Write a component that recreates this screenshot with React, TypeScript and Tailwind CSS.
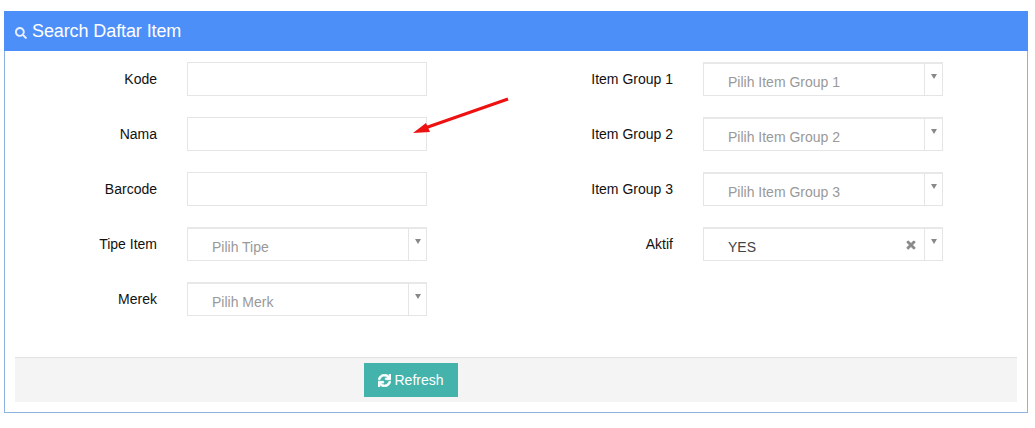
import React from 'react';
import { FaSearch, FaSync, FaTimes } from 'react-icons/fa';

interface SelectBoxProps {
  text: string;
  filled?: boolean;
}

function Field({ label, children }: { label: string; children: React.ReactNode }) {
  return (
    <div className="flex items-center h-[34px]">
      <label className="w-[142px] text-right text-[14px] leading-[20px] text-[#111]">{label}</label>
      <div className="ml-[30px] w-[240px] h-[34px]">{children}</div>
    </div>
  );
}

function TextBox() {
  return <input type="text" className="block w-full h-full border border-[#e5e5e5] bg-white outline-none" />;
}

function SelectBox({ text, filled }: SelectBoxProps) {
  return (
    <div className="flex w-full h-full border border-[#e5e5e5] border-t-2 border-t-[#e8e8e8] bg-white">
      <div className="flex-1 flex items-center pl-[24px] pt-[4px] relative">
        <span className={`text-[14px] leading-[20px] ${filled ? 'text-[#444]' : 'text-[#999]'}`}>{text}</span>
        {filled && <FaTimes className="absolute right-[7px] top-[10px] text-[#888] text-[12px] stroke-[30px] stroke-[#888]" />}
      </div>
      <div className="w-[18px] border-l border-[#e5e5e5] flex justify-center pt-[10px]">
        <div className="w-0 h-0 border-l-[3px] border-r-[3px] border-t-[5px] border-l-transparent border-r-transparent border-t-[#888]" />
      </div>
    </div>
  );
}

export default function App() {
  return (
    <div className="pt-[11px] pl-[4px] bg-white h-[428px] overflow-hidden" style={{ fontFamily: '"Liberation Sans", Arial, sans-serif' }}>
      <div className="relative w-[1024px] h-[402px] border border-[#8fb3e0] border-t-0 bg-white">
        <div className="h-[40px] -mx-px bg-[#4d8ff9] flex items-center pl-[11px] text-white">
          <FaSearch className="text-[12px] mt-[3px] text-[#e8f0ff]" />
          <span className="ml-[5px] text-[18px] leading-[24px] tracking-[-0.1px]">Search Daftar Item</span>
        </div>

        <div className="grid grid-cols-[516px_1fr] pl-[10px] pt-[11px]">
          <div className="flex flex-col gap-[21px]">
            <Field label="Kode"><TextBox /></Field>
            <Field label="Nama"><TextBox /></Field>
            <Field label="Barcode"><TextBox /></Field>
            <Field label="Tipe Item"><SelectBox text="Pilih Tipe" /></Field>
            <Field label="Merek"><SelectBox text="Pilih Merk" /></Field>
          </div>
          <div className="flex flex-col gap-[21px]">
            <Field label="Item Group 1"><SelectBox text="Pilih Item Group 1" /></Field>
            <Field label="Item Group 2"><SelectBox text="Pilih Item Group 2" /></Field>
            <Field label="Item Group 3"><SelectBox text="Pilih Item Group 3" /></Field>
            <Field label="Aktif"><SelectBox text="YES" filled /></Field>
          </div>
        </div>

        <div className="mt-[41px] ml-[10px] w-[1002px] h-[45px] border-t border-[#e2e2e2] bg-[#f4f4f4] pt-[5px] pl-[349px]">
          <button className="flex items-center justify-center w-[94px] h-[34px] bg-[#43b3ac] text-white text-[14px]">
            <FaSync className="text-[13px] mr-[3px] stroke-[30px] stroke-white" />
            Refresh
          </button>
        </div>

        {/* red annotation arrow on top of the form */}
        <svg className="absolute left-[400px] top-[80px]" width="120" height="60" viewBox="0 0 120 60">
          <line x1="103" y1="8" x2="20" y2="37" stroke="#ee1111" strokeWidth="3" />
          <polygon points="8,42 21,32 25,41" fill="#ee1111" />
        </svg>
      </div>
    </div>
  );
}
